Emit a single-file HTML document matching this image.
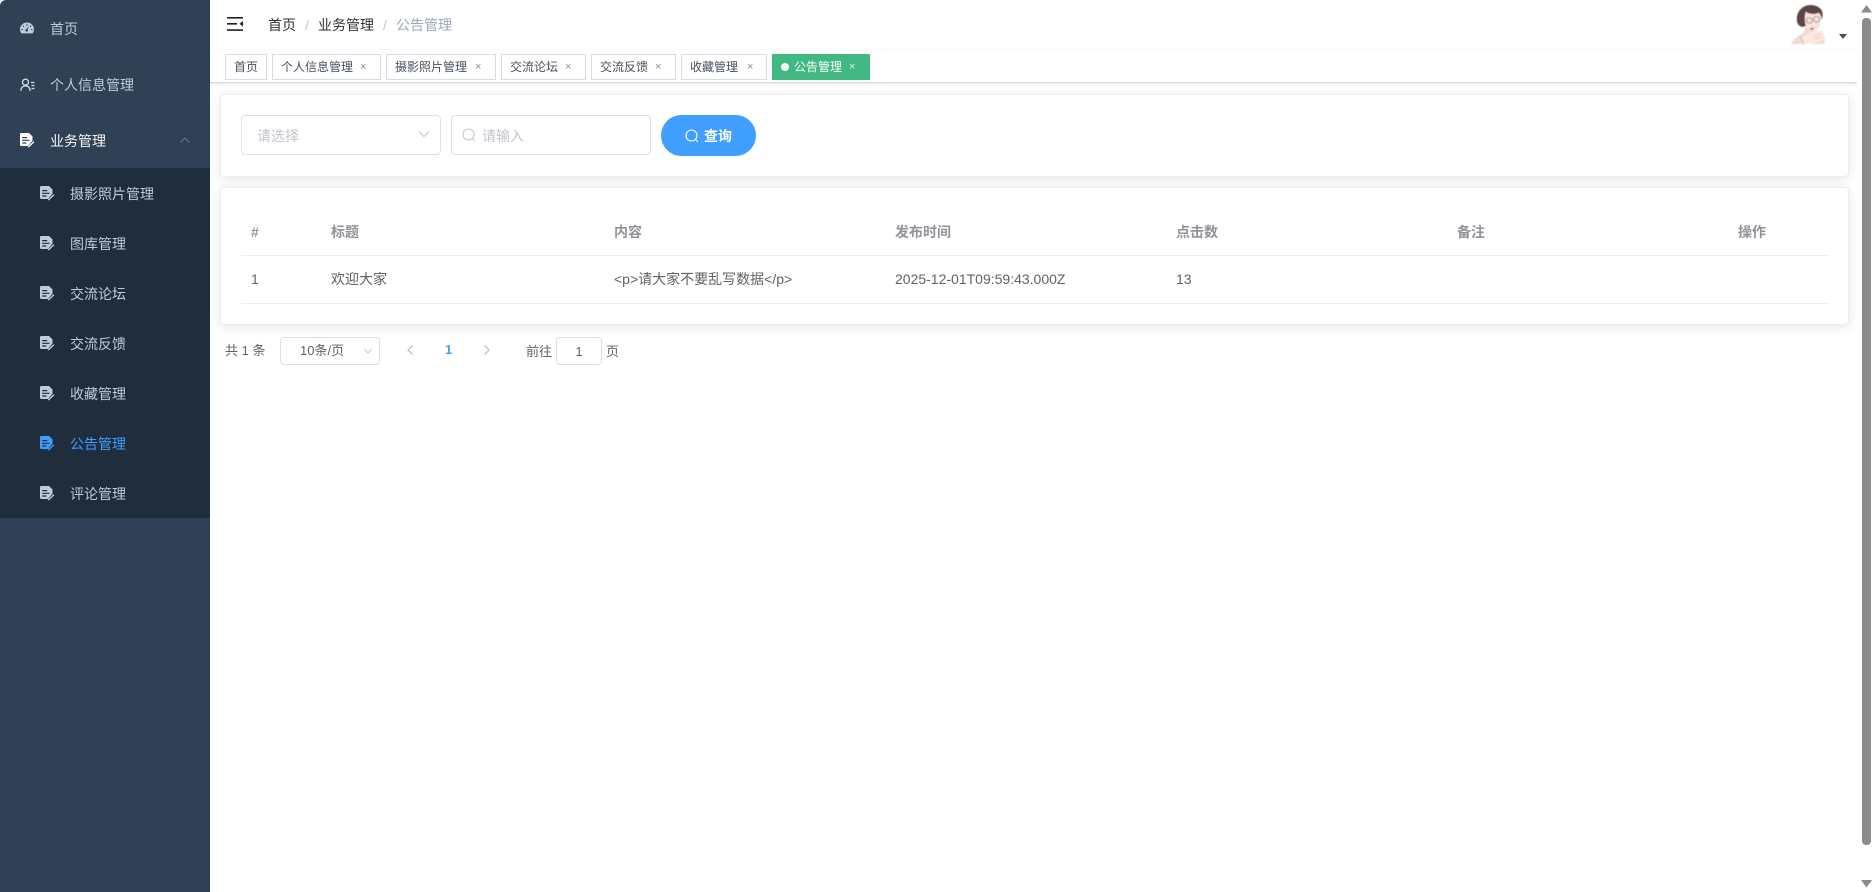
<!DOCTYPE html>
<html lang="zh-CN">
<head>
<meta charset="utf-8">
<title>公告管理</title>
<style>
*{box-sizing:border-box}
html,body{margin:0;padding:0;width:1874px;height:892px;overflow:hidden;background:#fff;font-family:"Liberation Sans","Noto Sans CJK SC",sans-serif;font-size:14px;color:#606266}
.a{position:absolute;white-space:nowrap}
#side{position:absolute;left:0;top:0;width:210px;height:892px;background:#304156;border-top-left-radius:6px}
#sub{position:absolute;left:0;top:168px;width:210px;height:350px;background:#1f2d3d}
.mi{position:absolute;height:20px;line-height:20px;color:#bfcbd9;white-space:nowrap}
.ic{position:absolute;width:15px;height:15px;color:#bfcbd9}
.tag{position:absolute;top:54px;height:26px;border:1px solid #d8dce5;background:#fff;color:#495060;font-size:12px;line-height:24px;padding-left:8px;white-space:nowrap}
.tag i{position:absolute;top:0;font-style:normal;color:#8a8f99;font-size:11px}
.card{position:absolute;left:220px;width:1629px;background:#fff;border:1px solid #ebeef5;border-radius:4px;box-shadow:0 2px 12px rgba(0,0,0,.1)}
.box{position:absolute;background:#fff;border:1px solid #dcdfe6;border-radius:4px}
.th{position:absolute;top:222px;height:20px;line-height:20px;color:#909399;font-weight:bold;white-space:nowrap}
.td{position:absolute;top:269px;height:20px;line-height:20px;color:#606266;white-space:nowrap}
.ph{position:absolute;color:#c0c4cc;white-space:nowrap}
</style>
</head>
<body>
<svg width="0" height="0" style="position:absolute">
<defs>
<symbol id="doc" viewBox="0 0 15 15">
<path fill="currentColor" fill-rule="evenodd" d="M1.200 0H9L12.500 3.400V7.600L8 13H1.200Q0 13 0 11.800V1.200Q0 0 1.200 0ZM2.200 4V5.200H7.200V4ZM2.200 6.700V7.900H9.500V6.700ZM2.200 9.400V10.600H6.400V9.400Z"/>
<path fill="none" stroke="currentColor" stroke-width="1.300" d="M8.800 13.600L14 8.600"/>
<path fill="currentColor" d="M7.800 14.500L8.200 12.800L9.400 14Z"/>
</symbol>
<filter id="soft" x="-5%" y="-5%" width="110%" height="110%"><feGaussianBlur stdDeviation=".45"/></filter>
</defs>
</svg>

<div id="side">
  <svg class="ic" style="left:20px;top:22px;width:14px;height:12px" viewBox="0 0 14 12"><path fill="currentColor" fill-rule="evenodd" d="M7 .5C3.100 .5 0 3.500 0 7.200C0 8.800 .6 10.200 1.400 11.400H12.600C13.400 10.200 14 8.800 14 7.200C14 3.500 10.900 .5 7 .5ZM6.500 2V3.600H7.500V2ZM3.200 3.300L2.500 4L3.600 5.100L4.300 4.400ZM10.800 3.300L9.700 4.400L10.400 5.100L11.500 4ZM9.300 3.900L7.600 7.400A1.300 1.300 0 1 1 6.500 7ZM1.500 7V8H3V7ZM11 7V8H12.500V7Z"/></svg>
  <div class="mi" style="left:50px;top:19px">首页</div>

  <svg class="ic" style="left:20px;top:78px" viewBox="0 0 15 15"><g fill="none" stroke="#d5dde6" stroke-width="1.300"><circle cx="5.500" cy="4.200" r="3"/><path d="M.8 12.800C1 9.500 3 7.800 5.500 7.800C8 7.800 9.800 9.500 10.200 12.800"/><path d="M11 4.500H14.500M11.500 7.500H14.500M11.500 10.500H14.500"/></g></svg>
  <div class="mi" style="left:50px;top:75px">个人信息管理</div>

  <svg class="ic" style="left:20px;top:133px;color:#fff"><use href="#doc"/></svg>
  <div class="mi" style="left:50px;top:131px;color:#f4f4f5">业务管理</div>
  <svg class="a" style="left:179px;top:136px" width="12" height="8" viewBox="0 0 12 8"><path d="M1.500 6.500L6 2L10.500 6.500" fill="none" stroke="#66758a" stroke-width="1"/></svg>

  <div id="sub"></div>
  <svg class="ic" style="left:40px;top:186px"><use href="#doc"/></svg><div class="mi" style="left:70px;top:184px">摄影照片管理</div>
  <svg class="ic" style="left:40px;top:236px"><use href="#doc"/></svg><div class="mi" style="left:70px;top:234px">图库管理</div>
  <svg class="ic" style="left:40px;top:286px"><use href="#doc"/></svg><div class="mi" style="left:70px;top:284px">交流论坛</div>
  <svg class="ic" style="left:40px;top:336px"><use href="#doc"/></svg><div class="mi" style="left:70px;top:334px">交流反馈</div>
  <svg class="ic" style="left:40px;top:386px"><use href="#doc"/></svg><div class="mi" style="left:70px;top:384px">收藏管理</div>
  <svg class="ic" style="left:40px;top:436px;color:#409eff"><use href="#doc"/></svg><div class="mi" style="left:70px;top:434px;color:#409eff">公告管理</div>
  <svg class="ic" style="left:40px;top:486px"><use href="#doc"/></svg><div class="mi" style="left:70px;top:484px">评论管理</div>
</div>

<!-- header -->
<div class="a" style="left:210px;top:0;width:1647px;height:50px;background:#fff;box-shadow:0 1px 4px rgba(0,21,41,.08)"></div>
<svg class="a" style="left:227px;top:17px" width="16" height="14" viewBox="0 0 16 14"><path fill="#222" d="M0 0H16V1.600H0ZM0 6H10V7.600H0ZM0 12.300H16V13.900H0ZM16 4V9.600L12.500 6.800Z"/></svg>
<div class="a" style="left:268px;top:15px;line-height:20px;color:#303133">首页</div>
<div class="a" style="left:305px;top:15px;line-height:20px;color:#c0c4cc">/</div>
<div class="a" style="left:318px;top:15px;line-height:20px;color:#303133">业务管理</div>
<div class="a" style="left:383px;top:15px;line-height:20px;color:#c0c4cc">/</div>
<div class="a" style="left:396px;top:15px;line-height:20px;color:#97a8be">公告管理</div>

<!-- avatar -->
<svg class="a" style="left:1790px;top:4px" width="36" height="41" viewBox="0 0 36 41">
  <g filter="url(#soft)">
  <path fill="#f0dcd4" d="M1 40C3 35 9 32 14 28L16 21H25L25 28C29 26 33 27 34 31C35 34 35 37 34 40Z"/>
  <path fill="#fbe9e2" d="M13 33C17 29 25 27 31 28C35 30 35 34 33 36C30 38 26 37 23 40H14Z"/>
  <g transform="translate(20.500 1) scale(1.200 1.100) translate(-19 -1)">
    <path fill="#f7e4dc" d="M13 7H28L27 19C25 25 21 26 18 24C14 22 12 17 13 7Z"/>
    <path fill="#5a4546" d="M8 17C6 8 12 1 19 1C25 1 30 5 29 11L28 15C28 11 27 9 26 8C22 10 17 9 15 7C14 11 14 15 15 20C12 22 9 20 8 17Z"/>
    <g fill="none" stroke="#80696a" stroke-width=".6"><circle cx="18" cy="15" r="2.500"/><circle cx="24" cy="14" r="2.500"/></g>
    <path fill="#d3141c" d="M18 22.500L22 21.500L20.500 23.800Z"/>
  </g>
  <path fill="none" stroke="#cfcdd0" stroke-width="1.500" d="M10 32L14 40"/>
  <path fill="none" stroke="#dfc3b8" stroke-width=".8" d="M24 32L32 30M24 35L32 33"/>
  </g>
</svg>
<svg class="a" style="left:1839px;top:34px" width="8" height="5" viewBox="0 0 8 5"><path fill="#4a4f57" d="M0 0H8L4 5Z"/></svg>

<!-- tags bar -->
<div class="a" style="left:210px;top:50px;width:1647px;height:33px;background:#fff;border-bottom:1px solid #d8dce5;box-shadow:0 1px 3px rgba(0,0,0,.12)"></div>
<div class="tag" style="left:225px;width:42px">首页</div>
<div class="tag" style="left:272px;width:109px">个人信息管理<i style="left:87px">×</i></div>
<div class="tag" style="left:386px;width:110px">摄影照片管理<i style="left:88px">×</i></div>
<div class="tag" style="left:501px;width:85px">交流论坛<i style="left:63px">×</i></div>
<div class="tag" style="left:591px;width:85px">交流反馈<i style="left:63px">×</i></div>
<div class="tag" style="left:681px;width:86px">收藏管理<i style="left:65px">×</i></div>
<div class="tag" style="left:772px;width:98px;background:#42b983;border-color:#42b983;color:#fff;padding-left:21px"><span style="position:absolute;left:8px;top:8px;width:8px;height:8px;border-radius:50%;background:#fff"></span>公告管理<i style="left:76px;color:#e4efe9">×</i></div>

<!-- search card -->
<div class="card" style="top:94px;height:83px"></div>
<div class="box" style="left:241px;top:115px;width:200px;height:40px"></div>
<div class="ph" style="left:257px;top:126px;line-height:20px">请选择</div>
<svg class="a" style="left:418px;top:130px" width="12" height="8" viewBox="0 0 12 8"><path d="M1 1.500L6 6.500L11 1.500" fill="none" stroke="#c0c4cc" stroke-width="1"/></svg>
<div class="box" style="left:451px;top:115px;width:200px;height:40px"></div>
<svg class="a" style="left:462px;top:128px" width="14" height="14" viewBox="0 0 14 14"><g fill="none" stroke="#c0c4cc" stroke-width="1"><circle cx="6.500" cy="6.500" r="5.500"/><path d="M10.500 10.500L13 13"/></g></svg>
<div class="ph" style="left:482px;top:126px;line-height:20px">请输入</div>
<div class="a" style="left:661px;top:115px;width:95px;height:41px;background:#409eff;border-radius:21px"></div>
<svg class="a" style="left:685px;top:129px" width="14" height="14" viewBox="0 0 14 14"><g fill="none" stroke="#fff" stroke-width="1.100"><circle cx="6.500" cy="6.500" r="5.500"/><path d="M10.500 10.500L13 13"/></g></svg>
<div class="a" style="left:704px;top:126px;line-height:20px;color:#fff;font-weight:bold">查询</div>

<!-- table card -->
<div class="card" style="top:187px;height:138px"></div>
<div class="a" style="left:241px;top:255px;width:1587px;height:1px;background:#ebeef5"></div>
<div class="a" style="left:241px;top:303px;width:1587px;height:1px;background:#ebeef5"></div>
<div class="th" style="left:251px">#</div>
<div class="th" style="left:331px">标题</div>
<div class="th" style="left:614px">内容</div>
<div class="th" style="left:895px">发布时间</div>
<div class="th" style="left:1176px">点击数</div>
<div class="th" style="left:1457px">备注</div>
<div class="th" style="left:1738px">操作</div>
<div class="td" style="left:251px">1</div>
<div class="td" style="left:331px">欢迎大家</div>
<div class="td" style="left:614px">&lt;p&gt;请大家不要乱写数据&lt;/p&gt;</div>
<div class="td" style="left:895px">2025-12-01T09:59:43.000Z</div>
<div class="td" style="left:1176px">13</div>

<!-- pagination -->
<div class="a" style="left:225px;top:341px;line-height:20px;font-size:13px">共 1 条</div>
<div class="box" style="left:280px;top:337px;width:100px;height:28px"></div>
<div class="a" style="left:300px;top:341px;line-height:20px;font-size:13px">10条/页</div>
<svg class="a" style="left:363px;top:348px" width="10" height="6" viewBox="0 0 10 6"><path d="M1 .8L5 5L9 .8" fill="none" stroke="#c0c4cc" stroke-width="1"/></svg>
<svg class="a" style="left:406px;top:344px" width="8" height="12" viewBox="0 0 8 12"><path d="M6.500 1.500L2 6L6.500 10.500" fill="none" stroke="#bfc3cb" stroke-width="1.300"/></svg>
<div class="a" style="left:445px;top:340px;line-height:20px;font-size:13px;font-weight:bold;color:#409eff">1</div>
<svg class="a" style="left:483px;top:344px" width="8" height="12" viewBox="0 0 8 12"><path d="M1.500 1.500L6 6L1.500 10.500" fill="none" stroke="#bfc3cb" stroke-width="1.300"/></svg>
<div class="a" style="left:526px;top:342px;line-height:20px;font-size:13px">前往</div>
<div class="box" style="left:556px;top:337px;width:46px;height:28px"></div>
<div class="a" style="left:556px;width:46px;text-align:center;top:342px;line-height:20px;font-size:13px">1</div>
<div class="a" style="left:606px;top:342px;line-height:20px;font-size:13px">页</div>

<!-- scrollbar -->
<div class="a" style="left:1857px;top:0;width:17px;height:892px;background:#fff"></div>
<div class="a" style="left:1862px;top:18px;width:9px;height:827px;background:#8b8b8b;border-radius:4px"></div>
<svg class="a" style="left:1861px;top:5px" width="11" height="8" viewBox="0 0 11 8"><path fill="#8b8b8b" d="M5.500 0L11 7.500H0Z"/></svg>
<svg class="a" style="left:1861px;top:880px" width="11" height="8" viewBox="0 0 11 8"><path fill="#8b8b8b" d="M5.500 7.500L11 0H0Z"/></svg>
</body>
</html>
